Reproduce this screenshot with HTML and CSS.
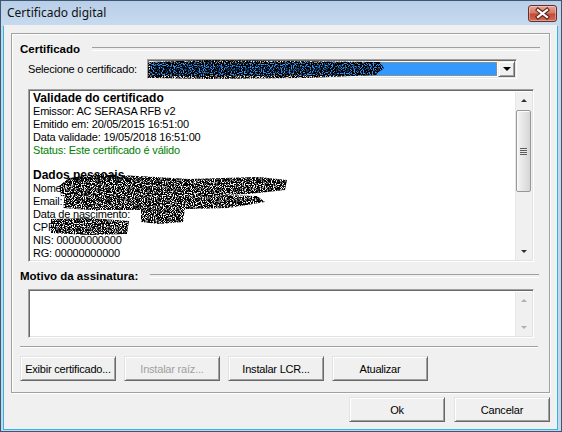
FILE: index.html
```html
<!DOCTYPE html>
<html lang="pt">
<head>
<meta charset="utf-8">
<title>Certificado digital</title>
<link rel="stylesheet" href="styles.css">
</head>
<body>
<svg class="defs" width="0" height="0" aria-hidden="true">
  <filter id="spk" filterUnits="userSpaceOnUse" x="0" y="0" width="600" height="300">
    <feTurbulence type="fractalNoise" baseFrequency="0.9" numOctaves="1" seed="4" result="n"/>
    <feColorMatrix in="n" type="matrix" values="0 0 0 0 0  0 0 0 0 0  0 0 0 0 0  7 0 0 0 -2.6" result="m"/>
    <feComposite in="SourceGraphic" in2="m" operator="in"/>
  </filter>
</svg>
<div class="window">
  <div class="titlebar">
    <span class="title">Certificado digital</span>
    <div class="close">
      <svg width="29" height="17" viewBox="0 0 29 17">
        <path d="M10 5 L19 12 M19 5 L10 12" stroke="#5a2018" stroke-width="4.2" stroke-linecap="square"/>
        <path d="M10 5 L19 12 M19 5 L10 12" stroke="#ffffff" stroke-width="2.2" stroke-linecap="square"/>
      </svg>
    </div>
  </div>
  <div class="client">
    <div class="panel">
      <div class="group-title"><span>Certificado</span></div>
      <div class="select-row">
        <span class="select-label">Selecione o certificado:</span>
        <div class="combo">
          <div class="combo-value">
            <svg class="combo-redact" width="240" height="22" viewBox="0 0 240 22">
              <path filter="url(#spk)" d="M0 2 L60 0 L140 1 L232 2 L236 8 L228 15 L160 18 L60 19 L0 18 Z" fill="#000"/>
            </svg>
          </div>
          <div class="combo-btn"><span class="tri-down"></span></div>
        </div>
      </div>
      <div class="infobox">
        <div class="info-text">
          <div class="line head">Validade do certificado</div>
          <div class="line">Emissor: AC SERASA RFB v2</div>
          <div class="line">Emitido em: 20/05/2015 16:51:00</div>
          <div class="line">Data validade: 19/05/2018 16:51:00</div>
          <div class="line ok">Status: Este certificado é válido</div>
          <div class="blank"></div>
          <div class="line head">Dados pessoais</div>
          <div class="line">Nome:</div>
          <div class="line">Email:</div>
          <div class="line">Data de nascimento:</div>
          <div class="line">CPF:</div>
          <div class="line">NIS: 00000000000</div>
          <div class="line">RG: 00000000000</div>
        </div>
        <svg class="redact" width="300" height="160" viewBox="0 0 300 160">
          <g fill="#000" filter="url(#spk)">
            <path d="M40 88 L70 84 L110 86 L160 89 L230 87 L258 90 L256 100 L220 104 L160 106 L100 108 L60 108 L32 106 L30 96 Z"/>
            <path d="M36 104 L90 103 L160 104 L228 106 L236 112 L200 118 L120 120 L60 120 L34 118 Z"/>
            <path d="M112 116 L140 115 L156 118 L154 132 L130 134 L112 132 Z"/>
            <path d="M22 129 L60 128 L100 131 L98 144 L60 145 L22 143 Z"/>
          </g>
        </svg>
        <div class="vscroll">
          <div class="sb-btn"><span class="tri-up"></span></div>
          <div class="sb-track">
            <div class="sb-thumb"><span class="grip"></span></div>
          </div>
          <div class="sb-btn"><span class="tri-down small"></span></div>
        </div>
      </div>
      <div class="group-title motivo"><span>Motivo da assinatura:</span></div>
      <div class="memo">
        <div class="memo-text"></div>
        <div class="vscroll disabled">
          <div class="sb-btn"><span class="tri-up"></span></div>
          <div class="sb-track"></div>
          <div class="sb-btn"><span class="tri-down small"></span></div>
        </div>
      </div>
      <div class="sep"></div>
      <div class="btn-row">
        <div class="btn">Exibir certificado...</div>
        <div class="btn disabled">Instalar raíz...</div>
        <div class="btn">Instalar LCR...</div>
        <div class="btn">Atualizar</div>
      </div>
    </div>
    <div class="footer">
      <div class="btn">Ok</div>
      <div class="btn">Cancelar</div>
    </div>
  </div>
</div>
</body>
</html>
```
FILE: styles.css
```css
* { box-sizing: border-box; }
html, body { margin: 0; padding: 0; background: #c5d9ee; }
body {
  font-family: "Liberation Sans", Arial, sans-serif;
  font-size: 11px;
  letter-spacing: -0.2px;
  color: #000;
}
.defs { position: absolute; width: 0; height: 0; }

.window {
  width: 562px;
  height: 432px;
  border: 1px solid #3e5670;
  background: #c4d8ed;
  display: flex;
  flex-direction: column;
}
.titlebar {
  height: 24px;
  flex: none;
  display: flex;
  align-items: flex-start;
  padding: 4px 4px 0 6px;
  background: linear-gradient(#b9cfe8, #c6daef);
}
.title {
  flex: 1;
  font-family: "Noto Sans", "Open Sans", sans-serif;
  font-size: 12px;
  letter-spacing: 0;
  line-height: 16px;
  color: #111;
}
.close {
  width: 29px;
  height: 17px;
  border: 1px solid #6b2c24;
  border-radius: 3px;
  background: linear-gradient(#e6a597 0%, #d47968 45%, #c34a36 55%, #cf6d55 100%);
  box-shadow: inset 0 0 0 1px rgba(255,255,255,0.35);
  position: relative;
}
.close svg { position: absolute; left: -1px; top: -1px; }

.client {
  flex: 1;
  margin: 0 4px 2px 3px;
  background: #f0f0f0;
  box-shadow: -1px 1px 0 0 #37b3df, 1px 1px 0 0 #37b3df;
  display: flex;
  flex-direction: column;
}

.panel {
  height: 360px;
  margin: 8px 7px 0 7px;
  border: 1px solid #a0a0a0;
  box-shadow: inset 1px 1px 0 #fff, 1px 1px 0 #fff;
  padding: 0 9px 0 8px;
  display: flex;
  flex-direction: column;
}

.group-title {
  margin-top: 8px;
  height: 14px;
  display: flex;
  align-items: center;
  font-weight: bold;
  font-size: 11.5px;
  letter-spacing: 0;
}
.group-title::after {
  content: "";
  flex: 1;
  margin-left: 12px;
  height: 2px;
  border-top: 1px solid #a0a0a0;
  border-bottom: 1px solid #fff;
}
.group-title.motivo { margin-top: 7px; }
.group-title.motivo::after { margin-left: 12px; margin-right: 1px; }

.select-row {
  margin-top: 3px;
  height: 20px;
  padding-left: 8px;
  display: flex;
  align-items: center;
}
.select-label { width: 119px; }
.combo {
  width: 370px;
  height: 20px;
  border-top: 1px solid #a0a0a0;
  border-left: 1px solid #a0a0a0;
  border-right: 1px solid #fff;
  border-bottom: 1px solid #fff;
  box-shadow: inset 1px 1px 0 #696969, inset -1px -1px 0 #e3e3e3;
  background: #fff;
  padding: 1px;
  display: flex;
}
.combo-value {
  flex: 1;
  margin: 1px 1px 1px 1px;
  background: #3399ff;
  border: 1px dotted #d08a3c;
  position: relative;
}
.combo-redact { position: absolute; left: -3px; top: -3px; }
.combo-btn {
  width: 17px;
  background: #f0f0f0;
  border-top: 1px solid #f0f0f0;
  border-left: 1px solid #f0f0f0;
  border-right: 1px solid #696969;
  border-bottom: 1px solid #696969;
  box-shadow: inset 1px 1px 0 #fff, inset -1px -1px 0 #a0a0a0;
  display: flex;
  align-items: center;
  justify-content: center;
}

.tri-down {
  width: 0; height: 0;
  border-left: 4px solid transparent;
  border-right: 4px solid transparent;
  border-top: 4px solid #000;
}
.tri-down.small {
  border-left-width: 3px;
  border-right-width: 3px;
  border-top-width: 3px;
  border-top-color: #303030;
}
.tri-up {
  width: 0; height: 0;
  border-left: 3px solid transparent;
  border-right: 3px solid transparent;
  border-bottom: 3px solid #303030;
}

.infobox, .memo {
  margin-left: 8px;
  width: 506px;
  border-top: 1px solid #a0a0a0;
  border-left: 1px solid #a0a0a0;
  border-right: 1px solid #fff;
  border-bottom: 1px solid #fff;
  box-shadow: inset 1px 1px 0 #696969, inset -1px -1px 0 #e3e3e3;
  background: #fff;
  padding: 2px 1px 1px 2px;
  display: flex;
  position: relative;
}
.infobox { margin-top: 10px; height: 173px; }
.memo { margin-top: 6px; height: 49px; }
.info-text { flex: 1; padding: 0 0 0 2px; }
.memo-text { flex: 1; }
.line { height: 13px; line-height: 13px; white-space: nowrap; }
.line.head { font-weight: bold; font-size: 12px; letter-spacing: 0; }
.line.ok { color: #008000; }
.blank { height: 12px; }
.redact { position: absolute; left: 0; top: 0; }

.vscroll {
  width: 17px;
  display: flex;
  flex-direction: column;
  background: #f0f0f0;
  border-left: 1px solid #e8e8e8;
}
.sb-btn {
  height: 17px;
  flex: none;
  display: flex;
  align-items: center;
  justify-content: center;
}
.sb-track { flex: 1; padding: 1px 0; }
.sb-thumb {
  height: 82px;
  margin: 0 1px 0 0;
  border: 1px solid #979797;
  border-radius: 2px;
  background: linear-gradient(to right, #f4f4f4, #e5e5e5 50%, #d6d6d6);
  box-shadow: inset 1px 1px 0 #fbfbfb;
  display: flex;
  align-items: center;
  justify-content: center;
}
.grip {
  width: 7px;
  height: 7px;
  background: repeating-linear-gradient(#5d5d5d 0 1px, #e8e8e8 1px 2px);
}
.vscroll.disabled .tri-up { border-bottom-color: #b0b0b0; }
.vscroll.disabled .tri-down { border-top-color: #b0b0b0; }

.sep {
  margin-top: 8px;
  margin-right: 2px;
  height: 2px;
  border-top: 1px solid #a0a0a0;
  border-bottom: 1px solid #fff;
}
.btn-row {
  margin-top: 8px;
  display: flex;
  gap: 8px;
}
.btn {
  width: 96px;
  height: 25px;
  background: #f0f0f0;
  border-top: 1px solid #e3e3e3;
  border-left: 1px solid #e3e3e3;
  border-right: 1px solid #696969;
  border-bottom: 1px solid #696969;
  box-shadow: inset 1px 1px 0 #fff, inset -1px -1px 0 #a0a0a0;
  display: flex;
  align-items: center;
  justify-content: center;
  white-space: nowrap;
}
.btn.disabled { color: #a0a0a0; }

.footer {
  margin-top: 4px;
  padding-right: 7px;
  display: flex;
  justify-content: flex-end;
  gap: 9px;
}
```
